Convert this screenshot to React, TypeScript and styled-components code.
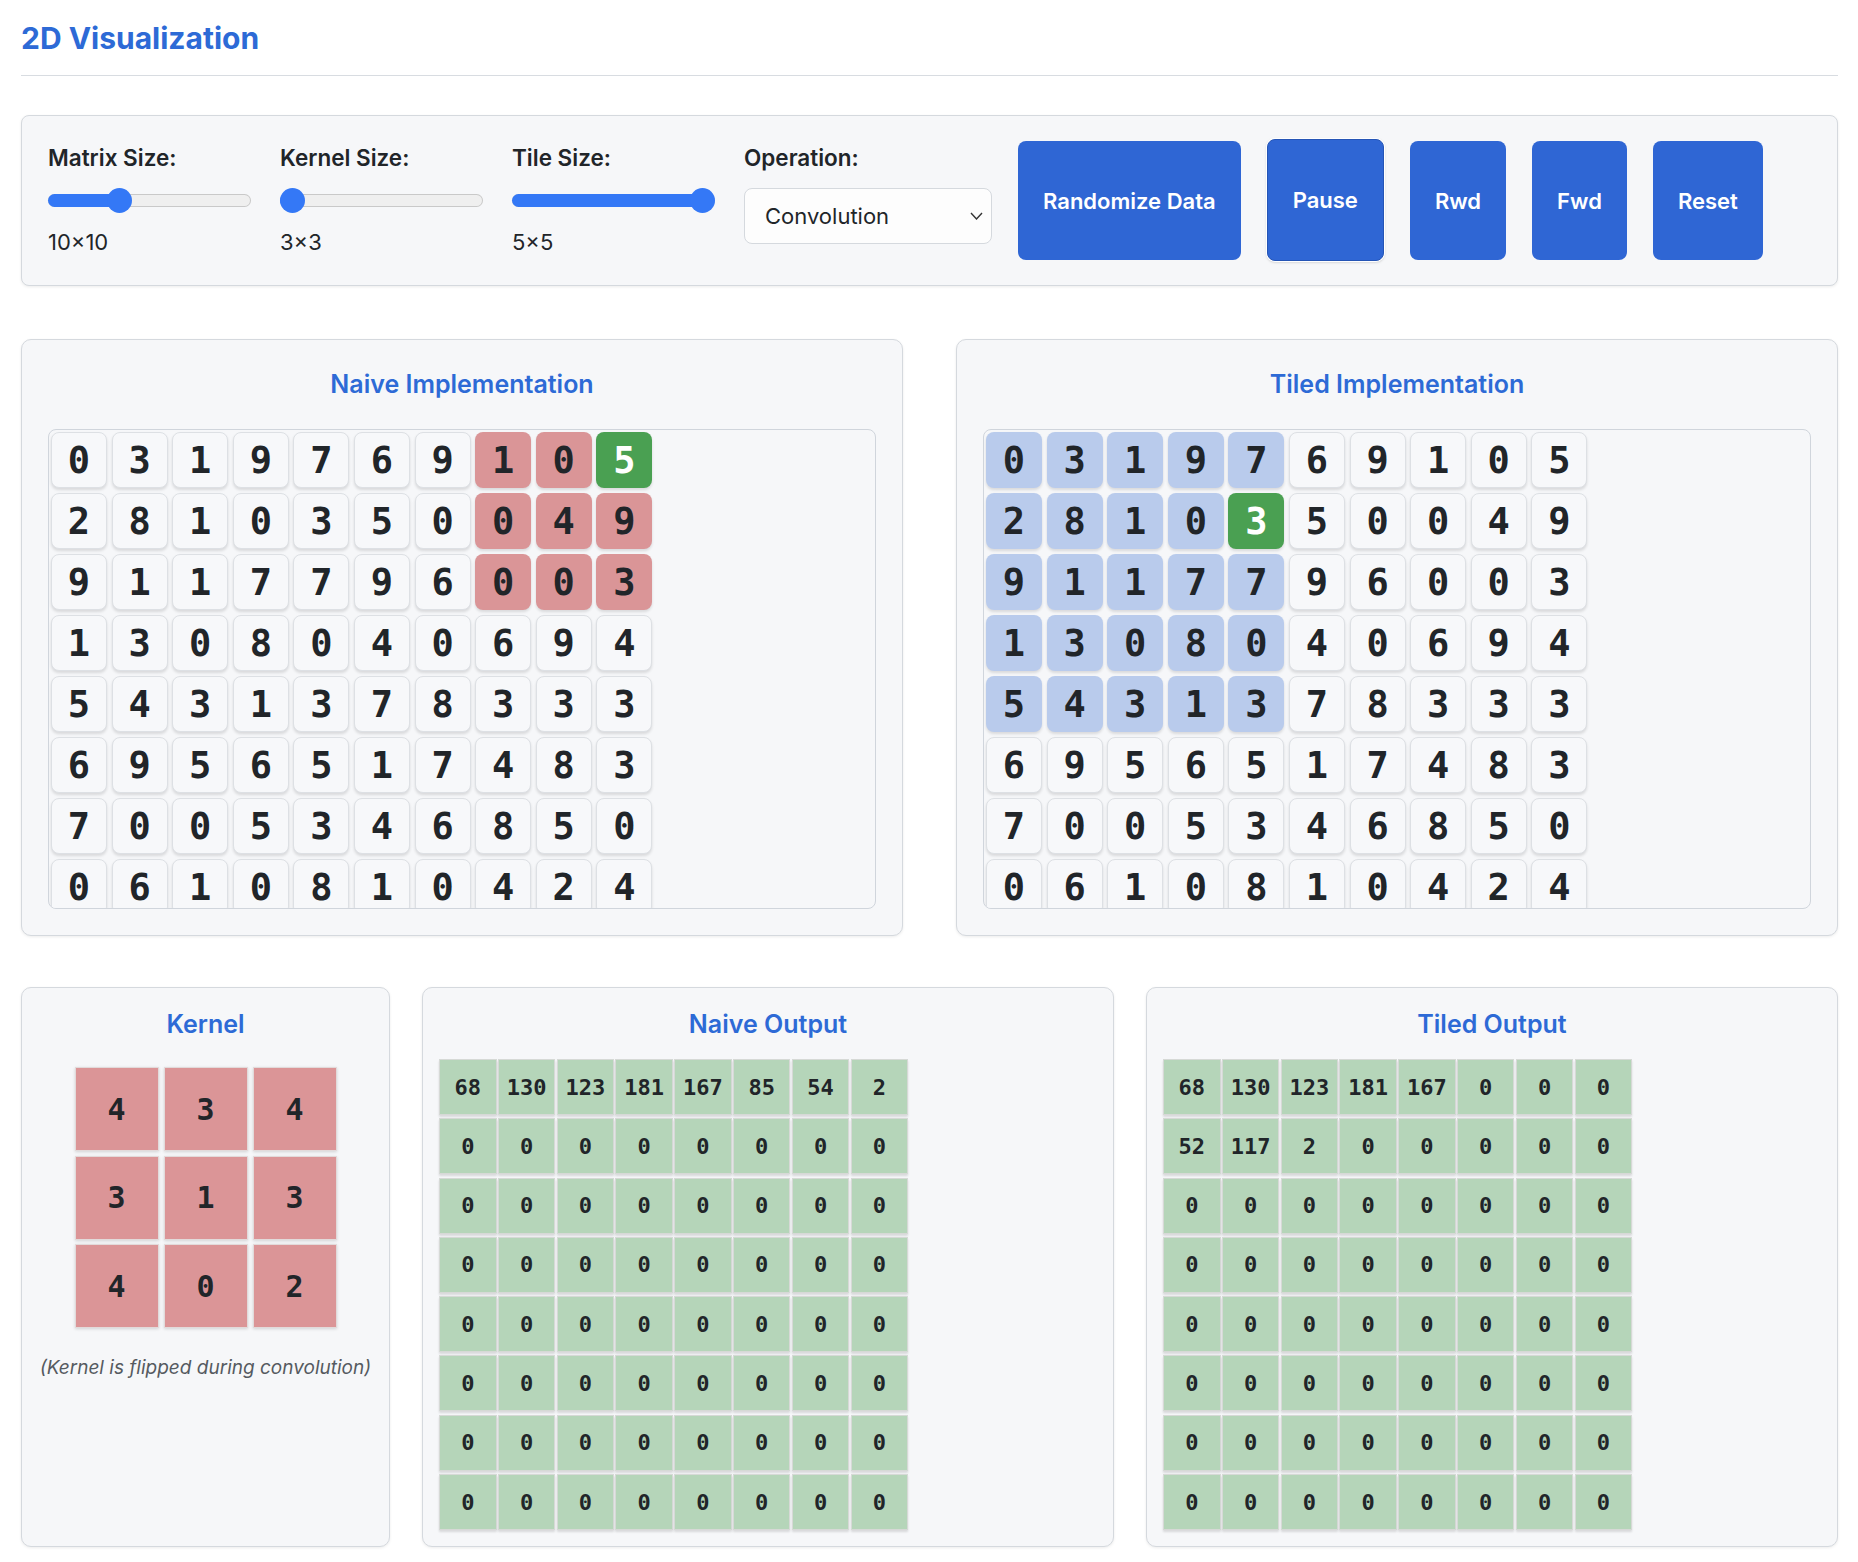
import React from "react";
import styled, { createGlobalStyle, css } from "styled-components";

const GlobalStyle = createGlobalStyle`
  html, body { margin: 0; padding: 0; background: #ffffff; }
  body {
    font-family: Inter, "Liberation Sans", Arial, sans-serif;
    color: #212529;
  }
  * { box-sizing: border-box; }
`;

const BLUE = "#2d6ad6";
const MONO = `"DejaVu Sans Mono", "Liberation Mono", monospace`;

const Page = styled.div`
  padding: 20px 20px 18px 21px;
`;

const Header = styled.header`
  border-bottom: 1px solid #d8dce1;
  padding-bottom: 19px;
`;

const Title = styled.h1`
  margin: 0;
  font-size: 30px;
  line-height: 36px;
  font-weight: 700;
  color: ${BLUE};
`;

const ControlPanel = styled.section`
  margin-top: 39px;
  min-height: 171px;
  display: flex;
  align-items: stretch;
  gap: 26px;
  padding: 25px 26px;
  background: #f6f7f9;
  border: 1px solid #d5d9de;
  border-radius: 8px;
  box-shadow: 0 1px 3px rgba(0, 0, 0, 0.08);
`;

const ControlGroup = styled.div<{ $w: number }>`
  width: ${(p) => p.$w}px;
  display: flex;
  flex-direction: column;
`;

const ControlLabel = styled.label`
  display: block;
  font-size: 22.5px;
  line-height: 34px;
  font-weight: 600;
  color: #212529;
`;

const ControlValue = styled.div`
  margin-top: 16px;
  font-size: 22px;
  line-height: 26px;
  color: #212529;
`;

const SliderBox = styled.div`
  position: relative;
  margin-top: 13px;
  width: 203px;
  height: 25px;
  display: flex;
  align-items: center;
`;

const Track = styled.div`
  width: 100%;
  height: 13px;
  border-radius: 7px;
  background: #efefef;
  box-shadow: inset 0 0 0 1px #c9c9c9;
  display: flex;
`;

const Fill = styled.div`
  height: 100%;
  border-radius: 7px;
  background: #3478f6;
`;

const Thumb = styled.div`
  position: absolute;
  top: 0;
  width: 25px;
  height: 25px;
  border-radius: 50%;
  background: #3478f6;
`;

const SelectWrap = styled.div`
  position: relative;
  margin-top: 13px;
  width: 248px;
  height: 56px;
`;

const Select = styled.select`
  appearance: none;
  -webkit-appearance: none;
  width: 100%;
  height: 100%;
  padding: 0 40px 0 20px;
  font-family: Inter, "Liberation Sans", Arial, sans-serif;
  font-size: 22px;
  color: #212529;
  background: #fdfdfd;
  border: 1px solid #d5d9de;
  border-radius: 8px;
  outline: none;
`;

const Chevron = styled.svg`
  position: absolute;
  right: 9px;
  top: 24px;
  pointer-events: none;
`;

const ActionButton = styled.button<{ $focused?: boolean }>`
  padding: 0 25px;
  font-family: Inter, "Liberation Sans", Arial, sans-serif;
  font-size: 22px;
  font-weight: 600;
  color: #ffffff;
  background: #2f66d4;
  border: none;
  border-radius: 8px;
  cursor: pointer;
  ${(p) =>
    p.$focused &&
    css`
      margin: -2px 0 -1px;
      border: 1px solid #2555b6;
      box-shadow: 0 0 0 1px #ffffff, 0 1px 3px rgba(0, 0, 0, 0.25);
    `}
`;

const ImplRow = styled.div`
  margin-top: 53px;
  display: grid;
  grid-template-columns: 1fr 1fr;
  gap: 53px;
`;

const Panel = styled.section<{ $compact?: boolean }>`
  background: #f6f7f9;
  border: 1px solid #d5d9de;
  border-radius: 10px;
  box-shadow: 0 1px 3px rgba(0, 0, 0, 0.08);
  padding: ${(p) => (p.$compact ? "21px 16px 16px" : "29px 26px 26px")};
`;

const PanelTitle = styled.h3<{ $gap: number }>`
  margin: 0 0 ${(p) => p.$gap}px;
  text-align: center;
  font-size: 25px;
  line-height: 30px;
  font-weight: 600;
  color: ${BLUE};
`;

const MatrixViewport = styled.div`
  height: 480px;
  overflow: hidden;
  border: 1px solid #d0d5dc;
  border-radius: 8px;
  padding: 2px;
`;

const MatrixGrid = styled.div`
  display: grid;
  grid-template-columns: repeat(10, 56px);
  column-gap: 4.6px;
  row-gap: 5px;
`;

type CellKind = "plain" | "red" | "green" | "blue";

const cellColors: Record<CellKind, { bg: string; fg: string }> = {
  plain: { bg: "#f7f8fa", fg: "#212529" },
  red: { bg: "#da9597", fg: "#212529" },
  green: { bg: "#4aa052", fg: "#ffffff" },
  blue: { bg: "#b9cbec", fg: "#212529" },
};

const MatrixCell = styled.div<{ $kind: CellKind }>`
  height: 56px;
  display: flex;
  align-items: center;
  justify-content: center;
  font-family: ${MONO};
  font-weight: 700;
  font-size: 37px;
  border-radius: 8px;
  border: 1px solid ${(p) => (p.$kind === "plain" ? "#dde0e4" : "transparent")};
  background: ${(p) => cellColors[p.$kind].bg};
  color: ${(p) => cellColors[p.$kind].fg};
  box-shadow: 0 2px 3px rgba(0, 0, 0, 0.12);
`;

const BottomRow = styled.div`
  margin-top: 51px;
  display: grid;
  grid-template-columns: 369px 1fr 1fr;
  gap: 32px;
`;

const KernelGrid = styled.div`
  margin: 28px auto 0;
  display: grid;
  width: max-content;
  grid-template-columns: repeat(3, 84px);
  grid-auto-rows: 84px;
  column-gap: 5px;
  row-gap: 4.5px;
`;

const KernelCell = styled.div`
  display: flex;
  align-items: center;
  justify-content: center;
  font-family: ${MONO};
  font-weight: 700;
  font-size: 30px;
  color: #212529;
  background: #db9597;
  border: 1px solid #e2dada;
  box-shadow: 0 1px 3px rgba(0, 0, 0, 0.15);
`;

const Caption = styled.p`
  margin: 29px 0 0;
  text-align: center;
  white-space: nowrap;
  font-size: 19px;
  line-height: 22px;
  font-style: italic;
  color: #555a60;
`;

const OutputGrid = styled.div`
  display: grid;
  grid-template-columns: repeat(8, 57.5px);
  grid-auto-rows: 56px;
  column-gap: 1.3px;
  row-gap: 3.3px;
`;

const OutputCell = styled.div`
  display: flex;
  align-items: center;
  justify-content: center;
  font-family: ${MONO};
  font-weight: 700;
  font-size: 22px;
  color: #212529;
  background: #b5d5b9;
  border: 1px solid #d6d9d6;
  box-shadow: 0 2px 2px rgba(0, 0, 0, 0.12);
`;

const matrix: number[][] = [
  [0, 3, 1, 9, 7, 6, 9, 1, 0, 5],
  [2, 8, 1, 0, 3, 5, 0, 0, 4, 9],
  [9, 1, 1, 7, 7, 9, 6, 0, 0, 3],
  [1, 3, 0, 8, 0, 4, 0, 6, 9, 4],
  [5, 4, 3, 1, 3, 7, 8, 3, 3, 3],
  [6, 9, 5, 6, 5, 1, 7, 4, 8, 3],
  [7, 0, 0, 5, 3, 4, 6, 8, 5, 0],
  [0, 6, 1, 0, 8, 1, 0, 4, 2, 4],
  [3, 2, 7, 1, 9, 0, 5, 2, 6, 1],
  [8, 5, 4, 2, 6, 3, 1, 9, 7, 2],
];

const kernel = [
  [4, 3, 4],
  [3, 1, 3],
  [4, 0, 2],
];

const zeroRow = [0, 0, 0, 0, 0, 0, 0, 0];
const naiveOut: number[][] = [
  [68, 130, 123, 181, 167, 85, 54, 2],
  ...Array.from({ length: 7 }, () => zeroRow),
];
const tiledOut: number[][] = [
  [68, 130, 123, 181, 167, 0, 0, 0],
  [52, 117, 2, 0, 0, 0, 0, 0],
  ...Array.from({ length: 6 }, () => zeroRow),
];

const naiveKind = (r: number, c: number): CellKind => {
  if (r === 0 && c === 9) return "green";
  if (r <= 2 && c >= 7) return "red";
  return "plain";
};

const tiledKind = (r: number, c: number): CellKind => {
  if (r === 1 && c === 4) return "green";
  if (r <= 4 && c <= 4) return "blue";
  return "plain";
};

function Slider({ label, value, pct }: { label: string; value: string; pct: number }) {
  const travel = 203 - 25;
  return (
    <ControlGroup $w={206}>
      <ControlLabel>{label}</ControlLabel>
      <SliderBox>
        <Track>
          <Fill style={{ width: pct * travel + 12.5 }} />
        </Track>
        <Thumb style={{ left: pct * travel }} />
      </SliderBox>
      <ControlValue>{value}</ControlValue>
    </ControlGroup>
  );
}

function MatrixPanel({ title, kind }: { title: string; kind: (r: number, c: number) => CellKind }) {
  return (
    <Panel>
      <PanelTitle $gap={30}>{title}</PanelTitle>
      <MatrixViewport>
        <MatrixGrid>
          {matrix.map((row, r) =>
            row.map((v, c) => (
              <MatrixCell key={`${r}-${c}`} $kind={kind(r, c)}>
                {v}
              </MatrixCell>
            ))
          )}
        </MatrixGrid>
      </MatrixViewport>
    </Panel>
  );
}

function OutputPanel({ title, data }: { title: string; data: number[][] }) {
  return (
    <Panel $compact>
      <PanelTitle $gap={20}>{title}</PanelTitle>
      <OutputGrid>
        {data.map((row, r) => row.map((v, c) => <OutputCell key={`${r}-${c}`}>{v}</OutputCell>))}
      </OutputGrid>
    </Panel>
  );
}

export default function App() {
  return (
    <>
      <GlobalStyle />
      <Page>
        <Header>
          <Title>2D Visualization</Title>
        </Header>

        <ControlPanel>
          <Slider label="Matrix Size:" value="10×10" pct={5 / 15} />
          <Slider label="Kernel Size:" value="3×3" pct={0} />
          <Slider label="Tile Size:" value="5×5" pct={1} />
          <ControlGroup $w={248}>
            <ControlLabel>Operation:</ControlLabel>
            <SelectWrap>
              <Select defaultValue="conv">
                <option value="conv">Convolution</option>
                <option value="matmul">Matrix Multiply</option>
              </Select>
              <Chevron width="13" height="8" viewBox="0 0 13 8">
                <polyline points="1,1 6.5,7 12,1" fill="none" stroke="#333" strokeWidth="1.4" />
              </Chevron>
            </SelectWrap>
          </ControlGroup>
          <ActionButton>Randomize Data</ActionButton>
          <ActionButton $focused>Pause</ActionButton>
          <ActionButton>Rwd</ActionButton>
          <ActionButton>Fwd</ActionButton>
          <ActionButton>Reset</ActionButton>
        </ControlPanel>

        <ImplRow>
          <MatrixPanel title="Naive Implementation" kind={naiveKind} />
          <MatrixPanel title="Tiled Implementation" kind={tiledKind} />
        </ImplRow>

        <BottomRow>
          <Panel $compact>
            <PanelTitle $gap={20}>Kernel</PanelTitle>
            <KernelGrid>
              {kernel.map((row, r) => row.map((v, c) => <KernelCell key={`${r}-${c}`}>{v}</KernelCell>))}
            </KernelGrid>
            <Caption>(Kernel is flipped during convolution)</Caption>
          </Panel>
          <OutputPanel title="Naive Output" data={naiveOut} />
          <OutputPanel title="Tiled Output" data={tiledOut} />
        </BottomRow>
      </Page>
    </>
  );
}
